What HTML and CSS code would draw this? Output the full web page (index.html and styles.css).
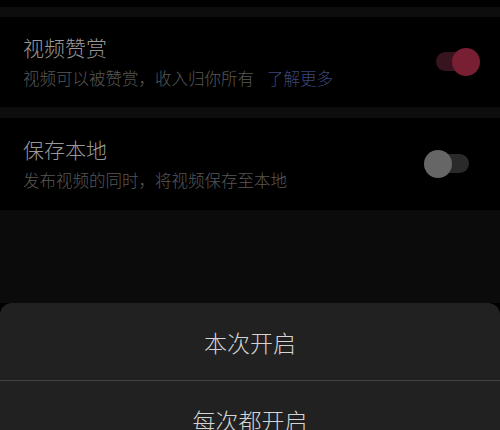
FILE: index.html
```html
<!DOCTYPE html>
<html lang="zh-CN">
<head>
<meta charset="utf-8">
<link rel="stylesheet" href="styles.css">
</head>
<body>
<div class="page">
  <div class="top"></div>
  <div class="sep"></div>
  <div class="row row-a">
    <div class="text">
      <div class="title">视频赞赏</div>
      <div class="sub">视频可以被赞赏，收入归你所有<span class="link">了解更多</span></div>
    </div>
    <div class="toggle on"><span class="track"></span><span class="knob"></span></div>
  </div>
  <div class="sep sep2"></div>
  <div class="row row-b">
    <div class="text">
      <div class="title">保存本地</div>
      <div class="sub">发布视频的同时，将视频保存至本地</div>
    </div>
    <div class="toggle off"><span class="track"></span><span class="knob"></span></div>
  </div>
  <div class="overlay"></div>
  <div class="sheet">
    <div class="option">本次开启</div>
    <div class="divider"></div>
    <div class="option">每次都开启</div>
  </div>
</div>
</body>
</html>
```

FILE: styles.css
```css
html, body {
  margin: 0;
  padding: 0;
  background: #000;
}
.page {
  width: 500px;
  height: 430px;
  overflow: hidden;
  display: flex;
  flex-direction: column;
  font-family: "Noto Sans CJK SC", "Noto Sans", sans-serif;
  font-weight: 300;
}
.top { height: 7px; background: #000; flex: none; }
.sep { height: 10px; background: #0d0d0d; flex: none; }
.sep2 { height: 11px; }
.row {
  flex: none;
  height: 90px;
  background: #000;
  display: flex;
  align-items: center;
  justify-content: space-between;
  padding-left: 23px;
  box-sizing: border-box;
}
.row-b { height: 92px; }
.text { display: flex; flex-direction: column; }
.title {
  font-size: 21px;
  line-height: 21px;
  color: #989898;
}
.sub {
  margin-top: 12px;
  font-size: 16.5px;
  line-height: 17px;
  color: #585858;
  white-space: nowrap;
}
.link {
  margin-left: 13px;
  color: #3b4679;
}
.toggle {
  position: relative;
  width: 46px;
  height: 28px;
  flex: none;
}
.toggle.on { margin-right: 20px; }
.toggle.off { margin-right: 30px; }
.track {
  position: absolute;
  top: 4px;
  height: 19px;
  border-radius: 10px;
}
.knob {
  position: absolute;
  top: 0;
  width: 28px;
  height: 28px;
  border-radius: 50%;
}
.on .track { left: 2px; right: 10px; background: #38141f; }
.on .knob { right: 0; background: #781f34; }
.off .track { left: 12px; right: 1px; background: #2a2a2a; }
.off .knob { left: 0; background: #666; }
.overlay {
  flex: none;
  height: 93px;
  background: #0b0b0b;
}
.sheet {
  flex: 1;
  background: #212121;
  border-radius: 12px 12px 0 0;
  display: flex;
  flex-direction: column;
}
.option {
  flex: none;
  height: 77px;
  display: flex;
  align-items: center;
  justify-content: center;
  font-size: 23px;
  color: #d4d4d4;
}
.divider {
  flex: none;
  height: 1px;
  background: #424242;
}
```
